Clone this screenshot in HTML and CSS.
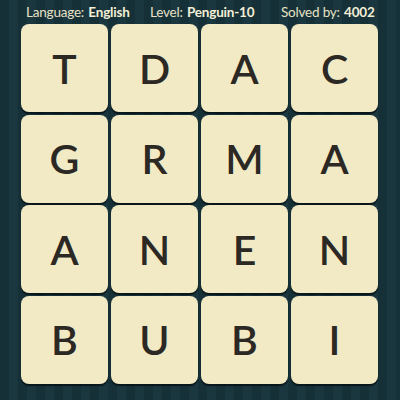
FILE: index.html
```html
<!DOCTYPE html>
<html>
<head>
<meta charset="utf-8">
<link rel="stylesheet" href="styles.css">
</head>
<body>
<div class="page">
  <div class="header">
    <span class="info lang">Language: <b>English</b></span>
    <span class="info level">Level: <b>Penguin-10</b></span>
    <span class="info solved">Solved by: <b>4002</b></span>
  </div>
  <div class="board">
    <div class="tile">T</div><div class="tile">D</div><div class="tile">A</div><div class="tile">C</div>
    <div class="tile">G</div><div class="tile">R</div><div class="tile">M</div><div class="tile">A</div>
    <div class="tile">A</div><div class="tile">N</div><div class="tile">E</div><div class="tile">N</div>
    <div class="tile">B</div><div class="tile">U</div><div class="tile">B</div><div class="tile">I</div>
  </div>
</div>
</body>
</html>
```
FILE: styles.css
```css
html, body {
  margin: 0;
  padding: 0;
}
body {
  width: 400px;
  height: 400px;
  overflow: hidden;
  background: repeating-linear-gradient(90deg, #163038 0 9px, #1a363e 9px 18px);
  font-family: "Lato", "Open Sans", sans-serif;
}
.page {
  width: 400px;
  height: 400px;
}
.header {
  height: 23px;
  display: flex;
  align-items: center;
  color: #e6e2c6;
  font-size: 13.5px;
  letter-spacing: -0.2px;
  padding-left: 26px;
}
.info b {
  font-weight: 700;
  color: #f3efd6;
  margin-left: 1px;
}
.lang { width: 124px; }
.level { width: 131px; }
.board {
  display: grid;
  grid-template-columns: repeat(4, 87px);
  grid-template-rows: repeat(4, 88px);
  gap: 2.5px 3px;
  padding-top: 1px;
  padding-left: 21px;
}
.tile {
  background: #f1eac4;
  border-radius: 8px;
  box-shadow: 0 2px 1px rgba(5, 15, 18, 0.8);
  display: flex;
  align-items: center;
  justify-content: center;
  color: #2c2824;
  font-size: 41px;
  font-weight: 600;
}
```
